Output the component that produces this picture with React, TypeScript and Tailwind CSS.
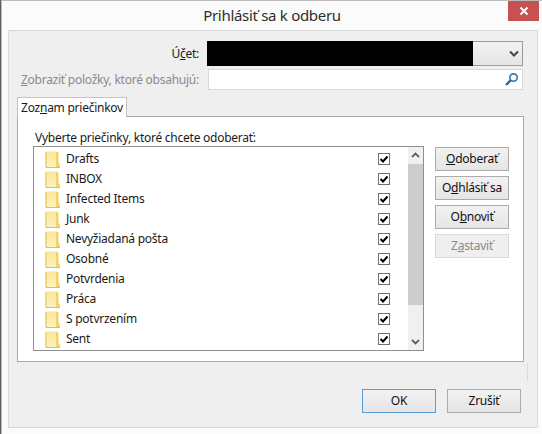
const folders = ["Drafts","INBOX","Infected Items","Junk","Nevyžiadaná pošta","Osobné","Potvrdenia","Práca","S potvrzením","Sent",""];

function Folder() {
  return (
    <svg width="16" height="19" viewBox="0 0 16 19" className="shrink-0">
      <defs>
        <linearGradient id="fg" x1="0" y1="0" x2="0" y2="1">
          <stop offset="0" stopColor="#fbe795" />
          <stop offset="1" stopColor="#fdf2bd" />
        </linearGradient>
      </defs>
      <path d="M1 3 Q1 1.5 2.5 1.5 L11 1.5 Q12.5 1.5 12.5 3 L12.5 17.5 L1 17.5 Z" fill="url(#fg)" />
      <path d="M1 1.8 L1 17.5" stroke="#ecc95f" strokeWidth="1.4" />
      <path d="M11 1.5 L13.5 2.5 L13.5 12 L15 15.5 L15 17.5 L11 17.5 Z" fill="#f4d268" />
      <path d="M1 17.5 L15 17.5" stroke="#dfbf5a" strokeWidth="1" />
    </svg>
  );
}

function Check() {
  return (
    <div className="w-[12px] h-[12px] border border-[#707070] bg-white flex items-center justify-center shrink-0">
      <svg width="10" height="10" viewBox="0 0 10 10">
        <path d="M1.5 5 L4 7.5 L8.5 2.5" fill="none" stroke="#000" strokeWidth="2" />
      </svg>
    </div>
  );
}

function Btn({ children, disabled, primary, w = "w-[74px]" }: { children: React.ReactNode; disabled?: boolean; primary?: boolean; w?: string }) {
  const tone = disabled
    ? "border-[#d9d9d9] bg-[#efefef] text-[#8a8a8a]"
    : primary
    ? "border-[#5b9bd5] bg-gradient-to-b from-[#f2f2f2] to-[#e5e5e5] text-[#111]"
    : "border-[#acacac] bg-gradient-to-b from-[#f2f2f2] to-[#e5e5e5] text-[#111]";
  return (
    <div className={`${w} h-[24px] border ${tone} flex items-center justify-center text-[12px] leading-none`}>
      <span>{children}</span>
    </div>
  );
}

export default function App() {
  return (
    <div className="w-[542px] h-[434px] bg-[#585f68] overflow-hidden" style={{ fontFamily: '"Noto Sans", sans-serif' }}>
      <div className="relative ml-px h-[434px] border-t border-l border-[#bdbdbd] bg-[#fbfbfb]">
        <div className="h-[29px] flex items-center justify-center text-[15px] leading-none text-[#2e2e2e] tracking-[-0.3px]">
          Prihlásiť sa k odberu
        </div>
        <div className="absolute right-[3px] top-0 w-[31px] h-[20px] bg-[#c75050] flex items-center justify-center">
          <svg width="10" height="10" viewBox="0 0 10 10">
            <path d="M1.5 1.5 L8.5 8.5 M8.5 1.5 L1.5 8.5" stroke="#fff" strokeWidth="2" />
          </svg>
        </div>

        <div className="ml-[6px] w-[530px] h-[398px] border border-[#d9d9d9] bg-[#efefef] text-[12px] text-[#1a1a1a] tracking-[-0.25px]">
          <div className="flex items-center h-[25px] mt-[10px]">
            <div className="w-[190px] text-right leading-none"><span>Ú<span className="underline">č</span>et:</span></div>
            <div className="ml-[8px] w-[316px] h-[25px] border border-[#9a9a9a] bg-gradient-to-b from-[#f2f2f2] to-[#e5e5e5] flex items-center">
              <div className="w-[266px] -ml-px h-[25px] bg-black" />
              <svg width="10" height="8" viewBox="0 0 10 8" className="ml-auto mr-[3px]">
                <path d="M1 1.5 L5 5.5 L9 1.5" fill="none" stroke="#444" strokeWidth="2" />
              </svg>
            </div>
          </div>

          <div className="flex items-center h-[21px] mt-[3px]">
            <div className="w-[190px] text-right leading-none text-[#8a8a8a]"><span className="underline">Z</span>obraziť položky, ktoré obsahujú:</div>
            <div className="ml-[9px] w-[315px] h-[21px] border border-[#d9d9d9] bg-white flex items-center justify-end pr-[3px]">
              <svg width="15" height="15" viewBox="0 0 15 15">
                <circle cx="9.5" cy="5.5" r="3.7" fill="none" stroke="#3f78ac" strokeWidth="1.7" />
                <path d="M6.8 8.2 L2 13" stroke="#2f689c" strokeWidth="2.4" />
              </svg>
            </div>
          </div>

          <div className="ml-[8px] mt-[7px] w-[110px] h-[20px] border border-b-0 border-[#c4c4c4] bg-white flex items-center justify-center leading-none relative z-10">
            <span>Zoz<span className="underline">n</span>am priečinkov</span>
          </div>

          <div className="ml-[8px] -mt-px w-[507px] h-[246px] border border-[#a9a9a9] bg-white pl-[15px] pt-[13px]">
            <div className="h-[16px] leading-[16px] pl-[2px]">Vyberte priečinky, ktoré chcete odoberať:</div>
            <div className="flex items-start">
              <div className="w-[391px] h-[205px] border border-[#8f8f8f] flex overflow-hidden">
                <div className="w-[374px] h-[203px] overflow-hidden pt-[2px]">
                  {folders.map((f, i) => (
                    <div key={i} className="h-[20px] flex items-center pl-[11px] pr-[17px]">
                      <Folder />
                      <div className="ml-[5px] flex-1 text-[#1a1a1a]">{f}</div>
                      {f && <Check />}
                    </div>
                  ))}
                </div>
                <div className="w-[15px] ml-px h-[203px] bg-[#f0f0f0] flex flex-col">
                  <div className="h-[17px] flex items-center justify-center">
                    <svg width="9" height="7" viewBox="0 0 9 7"><path d="M1 5 L4.5 1.5 L8 5" fill="none" stroke="#606060" strokeWidth="1.8" /></svg>
                  </div>
                  <div className="h-[141px] bg-[#cdcdcd]" />
                  <div className="flex-1 flex items-end justify-center pb-[5px]">
                    <svg width="9" height="7" viewBox="0 0 9 7"><path d="M1 2 L4.5 5.5 L8 2" fill="none" stroke="#606060" strokeWidth="1.8" /></svg>
                  </div>
                </div>
              </div>
              <div className="ml-[11px] flex flex-col gap-[5px] mt-[1px]">
                <Btn><span className="underline">O</span>doberať</Btn>
                <Btn>O<span className="underline">d</span>hlásiť sa</Btn>
                <Btn>O<span className="underline">b</span>noviť</Btn>
                <Btn disabled>Z<span className="underline">a</span>staviť</Btn>
              </div>
            </div>
          </div>

          <div className="flex">
            <div className="ml-[518px] w-px h-[18px] mt-[1px] bg-[#dcdcdc]" />
          </div>

          <div className="flex mt-[8px] ml-[353px] gap-[11px]">
            <Btn primary>OK</Btn>
            <Btn>Zrušiť</Btn>
          </div>
        </div>
      </div>
    </div>
  );
}
